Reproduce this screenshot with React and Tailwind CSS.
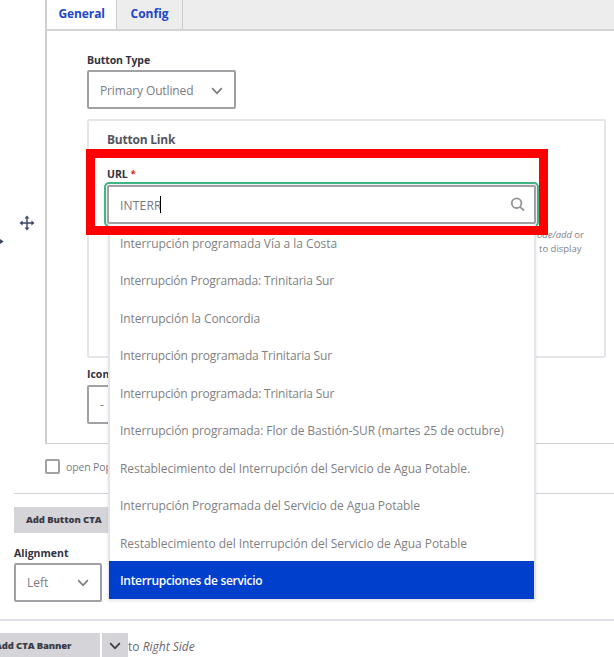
import React from "react";

const suggestions = [
  { text: "Interrupción programada Vía a la Costa", tracking: "tracking-[-0.055px]" },
  { text: "Interrupción Programada: Trinitaria Sur", tracking: "tracking-[-0.17px]" },
  { text: "Interrupción la Concordia", tracking: "tracking-[-0.1px]" },
  { text: "Interrupción programada Trinitaria Sur", tracking: "tracking-[-0.15px]" },
  { text: "Interrupción programada: Trinitaria Sur", tracking: "tracking-[-0.17px]" },
  { text: "Interrupción programada: Flor de Bastión-SUR (martes 25 de octubre)", tracking: "tracking-[-0.08px]" },
  { text: "Restablecimiento del Interrupción del Servicio de Agua Potable.", tracking: "tracking-[-0.05px]" },
  { text: "Interrupción Programada del Servicio de Agua Potable", tracking: "tracking-[-0.05px]" },
  { text: "Restablecimiento del Interrupción del Servicio de Agua Potable", tracking: "tracking-[-0.05px]" },
];

function Chevron({ className }) {
  return (
    <svg className={className} width="12" height="8" viewBox="0 0 12 8" fill="none" stroke="currentColor" strokeWidth="1.7">
      <path d="M1.2 1.2 6 6.3l4.8-5.1" />
    </svg>
  );
}

function MoveIcon() {
  return (
    <svg width="16" height="16" viewBox="0 0 16 16" fill="#3a4564" stroke="#3a4564">
      <path d="M8 2v12M2 8h12" strokeWidth="1.4" />
      <path d="M8 .5 10.4 3.6H5.6zM8 15.5 5.6 12.4h4.8zM.5 8l3.1-2.4v4.8zM15.5 8l-3.1 2.4V5.6z" stroke="none" />
    </svg>
  );
}

function Suggestions() {
  return (
    <ul className="absolute left-[-1px] top-[37px] z-10 w-[428px] border-x-2 border-[#e4e4ea] bg-white shadow-[0_2px_3px_rgba(0,0,0,0.10)]">
      {suggestions.map((item, i) => (
        <li key={i} className={`flex h-[37.5px] items-center whitespace-nowrap pl-[10px] pt-[4px] text-[12px] text-[#7f7f82] first:-mt-px ${item.tracking}`}>
          <span>{item.text}</span>
        </li>
      ))}
      <li className="-ml-px flex h-[38px] items-center whitespace-nowrap bg-[#003ecc] pl-[11px] pt-[2px] text-[12px] font-semibold tracking-[-0.31px] text-white">
        <span>Interrupciones de servicio</span>
      </li>
    </ul>
  );
}

export default function App() {
  return (
    <div className="relative flex h-[657px] w-[614px] flex-col overflow-hidden bg-white font-['Open_Sans','Noto_Sans',sans-serif] text-[12px] leading-4 text-[#7c7c82]">
      <div className="flex h-[444px] shrink-0">
        <div className="relative w-[45px] shrink-0">
          <div className="pl-[19px] pt-[215px]">
            <MoveIcon />
          </div>
          <svg className="absolute left-0 top-[238px]" width="4" height="7" viewBox="0 0 4 7" fill="#3a4564">
            <path d="M0 1 3.7 3.5 0 6z" />
          </svg>
        </div>
        <section className="flex min-w-0 flex-1 flex-col border-b border-l-2 border-[#cfcfcf]">
          <nav className="flex h-[31px] shrink-0 border-b-2 border-[#d4d4d4] bg-[#ededed] font-bold text-[#1c45d0]">
            <div className="flex w-[70px] items-center border-r border-[#cccccc] bg-white pb-[2px] pl-[11.5px] tracking-[-0.1px]">
              <span>General</span>
            </div>
            <div className="flex w-[66px] items-center border-r border-[#cccccc] pb-[2px] pl-[13.5px]">
              <span>Config</span>
            </div>
          </nav>
          <div className="flex flex-col pl-[40px]">
            <div className="mt-[21px] h-4 text-[10.5px] font-bold tracking-[-0.1px] text-[#323240]">
              <span>Button Type</span>
            </div>
            <div className="mt-[2px] flex h-[39px] w-[149px] items-center justify-between rounded-[2px] border-2 border-[#a0a0a5] pl-[11px] pr-[11px] pt-[3px]">
              <span className="tracking-[-0.13px]">Primary Outlined</span>
              <Chevron />
            </div>
            <fieldset className="mt-[10px] h-[239px] w-[519px] rounded-[2px] border-2 border-[#e5e5ea] pl-[18px]">
              <div className="mt-[11px] h-4 font-bold tracking-[-0.22px] text-[#55555e]">
                <span>Button Link</span>
              </div>
              <div className="mt-[18px] flex h-4 gap-[3px] text-[10.5px] font-bold text-[#323240]">
                <span>URL</span>
                <span className="text-[9px] text-[#e02020]">*</span>
              </div>
              <div className="flex">
                <div className="relative mt-[3px] flex h-[39px] w-[429px] shrink-0 items-center justify-between rounded-[2px] border-2 border-[#a0a0a5] bg-white pl-[11px] pr-[9px] shadow-[0_0_0_1px_#f0f0f4,0_0_0_3px_#3fb583]">
                  <div className="flex items-center">
                    <span className="mt-[2px] tracking-[0.2px] text-[#777780]">INTERR</span>
                    <span className="-ml-[1.5px] h-[17px] w-px bg-black" />
                  </div>
                  <svg width="15" height="15" viewBox="0 0 15 15" fill="none" stroke="#929297" strokeWidth="1.8">
                    <circle cx="6.6" cy="6.2" r="4.8" />
                    <path d="m10 9.8 4 3.7" />
                  </svg>
                  <Suggestions />
                </div>
                <div className="ml-[2px] mt-[46px] whitespace-nowrap text-[9.5px] leading-[13.5px] text-[#82828c]">
                  <p className="-ml-px italic tracking-[-0.05px]"><span>ode/add</span> <span className="not-italic">or</span></p>
                  <p className="ml-px"><span>to display</span></p>
                </div>
              </div>
            </fieldset>
            <div className="mt-[8px] h-4 text-[10.5px] font-bold text-[#323240]">
              <span>Icon</span>
            </div>
            <div className="mt-[3px] flex h-[39px] w-[149px] items-center rounded-[2px] border-2 border-[#a0a0a5] pl-[11px]">
              <span>-</span>
            </div>
          </div>
        </section>
      </div>
      <div className="ml-[14px] flex h-[50px] shrink-0 items-center gap-[6px] border-b border-[#cfcfd8] pl-[31px]">
        <span className="mb-[5px] h-[15px] w-[15px] rounded-[2px] border-2 border-[#a0a0a5]" />
        <span className="mb-[3px] text-[10.5px] tracking-[-0.15px]">open Pop</span>
      </div>
      <div className="flex h-[127px] shrink-0 flex-col border-b-2 border-[#e0e0e6] pl-[14px]">
        <div className="mt-[13px] flex h-[26px] w-[110px] shrink-0 items-center bg-[#d4d4d9] pl-[12px] text-[9.5px] font-extrabold tracking-[-0.08px] text-[#3a3a44]">
          <span>Add Button CTA</span>
        </div>
        <div className="mt-[12px] h-4 text-[10.5px] font-bold text-[#323240]">
          <span>Alignment</span>
        </div>
        <div className="mt-[2px] flex h-[39px] w-[88px] shrink-0 items-center justify-between rounded-[2px] border-2 border-[#a0a0a5] pl-[11px] pr-[11px]">
          <span>Left</span>
          <Chevron />
        </div>
      </div>
      <div className="mt-[12px] flex h-[25px] shrink-0 text-[#3a3a44]">
        <div className="flex w-[100px] items-center overflow-hidden bg-[#d4d4d9] text-[9.5px] font-extrabold tracking-[-0.12px]">
          <span className="-ml-[5px] whitespace-nowrap">Add CTA Banner</span>
        </div>
        <div className="ml-[2px] flex w-[26px] items-center justify-center bg-[#d4d4d9]">
          <Chevron />
        </div>
        <div className="flex items-center whitespace-nowrap pt-[2px] text-[#686870]">
          <span>to <em>Right Side</em></span>
        </div>
      </div>
      <div className="absolute left-[86px] top-[149px] z-20 h-[86px] w-[462px] border-[9px] border-[#ff0000]" />
    </div>
  );
}
